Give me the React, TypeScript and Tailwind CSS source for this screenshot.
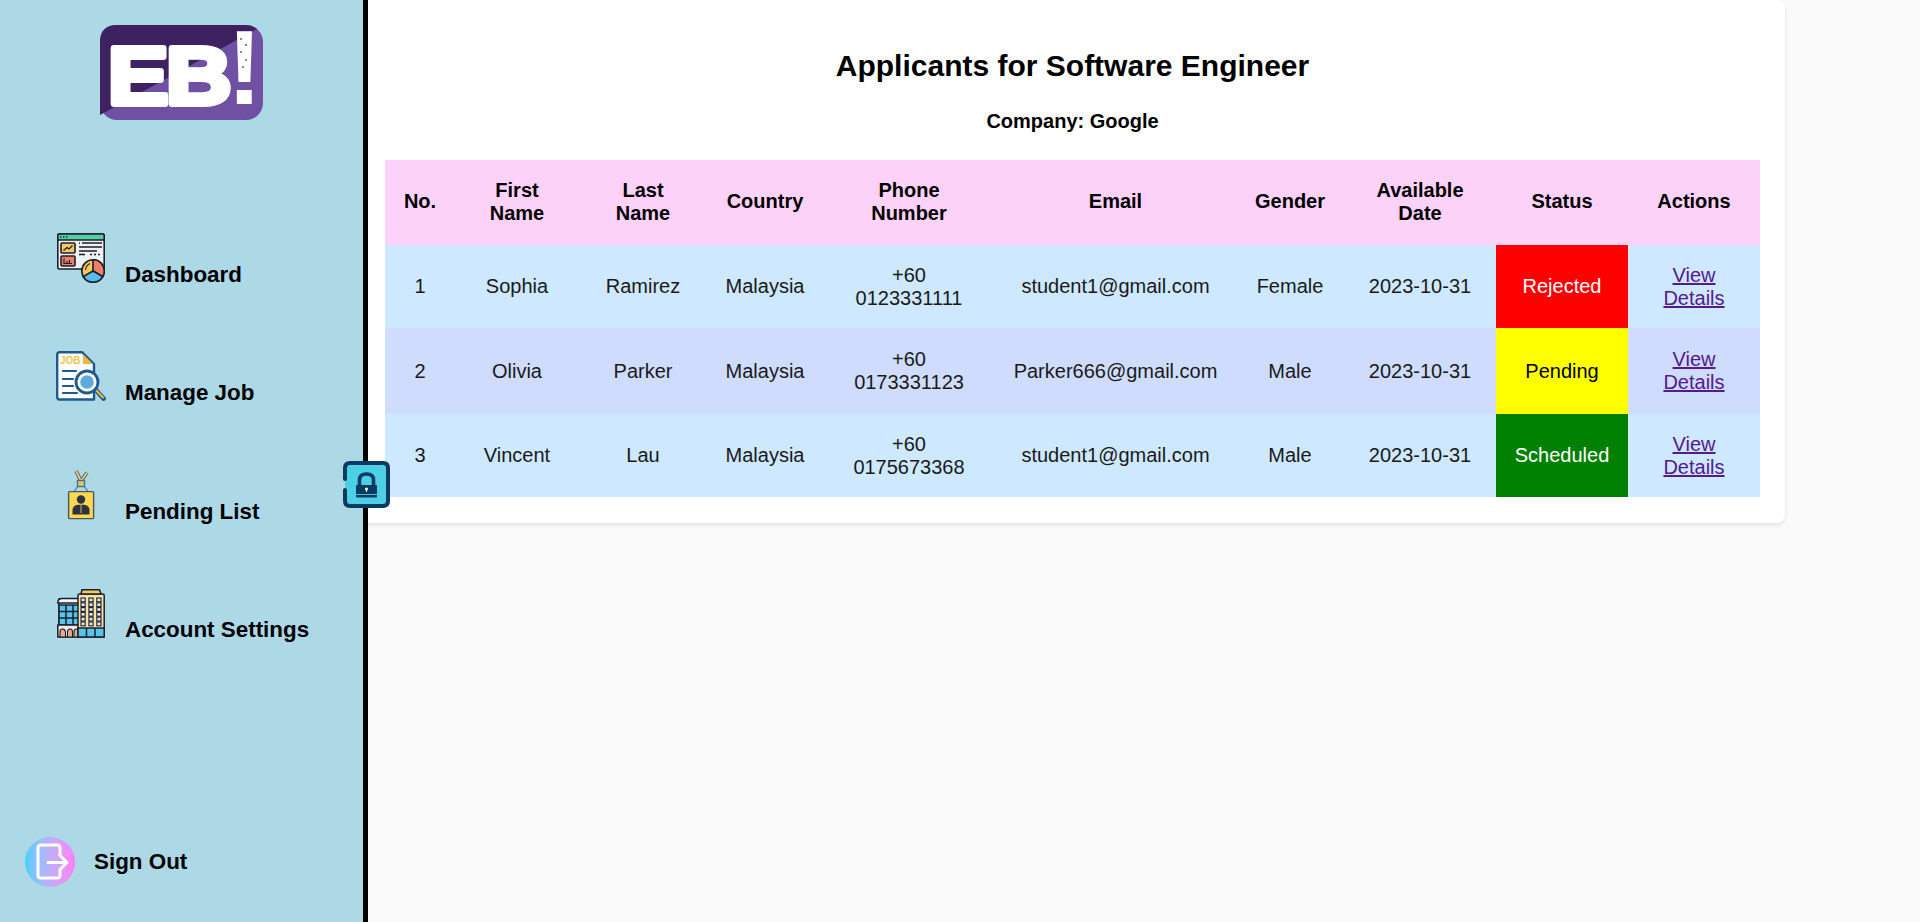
import React from "react";

const D = "#1b1f2e";

function Logo() {
  const f = "'Liberation Sans', sans-serif";
  return (
    <svg width="163" height="95" viewBox="0 0 163 95" className="block overflow-visible">
      <rect width="163" height="95" rx="17" fill="#6f50a2" />
      <path d="M17 0H146Q152 0 157 4L0 90V17Q0 0 17 0Z" fill="#3e2161" />
      <text transform="translate(8 79) scale(1.12 1)" fontFamily={f} fontWeight="700" fontSize="81" fill="#fff" stroke="#fff" strokeWidth="6" strokeLinejoin="round">E</text>
      <text transform="translate(66 79) scale(1.12 1)" fontFamily={f} fontWeight="700" fontSize="81" fill="#fff" stroke="#fff" strokeWidth="6" strokeLinejoin="round">B</text>
      <text x="127" y="79" fontFamily={f} fontWeight="700" fontSize="105" fill="#fff">!</text>
      <g fill="#6f50a2">
        <circle cx="141" cy="14" r="1" /><circle cx="146" cy="20" r="1.1" /><circle cx="141" cy="27" r="1" /><circle cx="146" cy="35" r="1" /><circle cx="143" cy="42" r="1" />
      </g>
    </svg>
  );
}

function DashIcon() {
  return (
    <svg width="48" height="50" viewBox="0 0 48 50" className="block">
      <rect x="0.8" y="1" width="46.4" height="35" rx="1.5" fill="#eef0f2" stroke={D} strokeWidth="1.6" />
      <path d="M0.8 7V2.5Q0.8 1 2.3 1H45.7Q47.2 1 47.2 2.5V7Z" fill="#52cfa6" stroke={D} strokeWidth="1.6" />
      <g fill={D}><rect x="3" y="3.3" width="1.4" height="1.4" /><rect x="6" y="3.3" width="1.4" height="1.4" /><rect x="9" y="3.3" width="1.4" height="1.4" /></g>
      <rect x="4" y="10" width="14" height="10" rx="1" fill="#f6c85f" stroke={D} strokeWidth="1.6" />
      <path d="M6.5 17.5L10 14.5L12 16L15.5 12.5" fill="none" stroke={D} strokeWidth="1.3" />
      <rect x="4" y="23" width="14" height="10" rx="1" fill="#ee7f69" stroke={D} strokeWidth="1.6" />
      <path d="M7 25.5V30.5H15M10 28V30M12.5 27V30" fill="none" stroke={D} strokeWidth="1.2" />
      <path d="M25 10H45M22 14H45M22 18H40" stroke={D} strokeWidth="1.5" />
      <path d="M22 10H23M22 21.5H28M33 21.5H35M37 21.5H39M41 21.5H43" stroke={D} strokeWidth="1.3" />
      <circle cx="36" cy="38" r="11.2" fill="#f6c85f" stroke={D} strokeWidth="1.6" />
      <path d="M36 26.8A11.2 11.2 0 0 1 45.7 43.6L36 38Z" fill="#ee7f69" stroke={D} strokeWidth="1.6" />
      <path d="M45.7 43.6A11.2 11.2 0 0 1 26.3 43.6L36 38Z" fill="#56bde8" stroke={D} strokeWidth="1.6" />
      <path d="M28.5 37A8 8 0 0 1 33 30.5" fill="none" stroke={D} strokeWidth="1.1" />
    </svg>
  );
}

function JobIcon() {
  const b = "#1e5a8e";
  return (
    <svg width="50" height="50" viewBox="0 0 50 50" className="block">
      <path d="M3.5 1.2H26L38 13V48.5H3.5Q1.2 48.5 1.2 46V3.5Q1.2 1.2 3.5 1.2Z" fill="#fff" stroke={b} strokeWidth="2.4" strokeLinejoin="round" />
      <path d="M27 3V13H37Z" fill="#eab93c" />
      <text x="4" y="12.5" fontFamily="'Liberation Sans', sans-serif" fontWeight="700" fontSize="10" fill="#f4c24a">JOB</text>
      <path d="M7 20H20M7 28H17M7 35H17M7 42H21" stroke={b} strokeWidth="2.2" strokeLinecap="round" />
      <path d="M39 38L47.5 47.5" stroke={b} strokeWidth="4.8" strokeLinecap="round" />
      <path d="M40 39L47 46.5" stroke="#eab93c" strokeWidth="2.2" strokeLinecap="round" />
      <circle cx="31" cy="31" r="11" fill="#fff" stroke={b} strokeWidth="2.8" />
      <circle cx="31" cy="31" r="6.8" fill="#5fa9df" />
    </svg>
  );
}

function BadgeIcon() {
  const c = "#4a5565";
  return (
    <svg width="30" height="50" viewBox="0 0 30 50" className="block">
      <path d="M10 1L15 11L21 2.5" fill="none" stroke={c} strokeWidth="3.6" />
      <path d="M10 1L15 11L21 2.5" fill="none" stroke="#e5d27a" strokeWidth="1.8" />
      <rect x="11.5" y="10.5" width="7" height="6" fill="#e9c85a" stroke="#44709c" strokeWidth="1.4" />
      <path d="M12 16L8 21.5M18 16L22 21.5" stroke="#44709c" strokeWidth="1.1" />
      <rect x="2.6" y="21.6" width="25" height="27" rx="1" fill="#fcd94f" stroke={c} strokeWidth="1.4" />
      <circle cx="15" cy="29.5" r="4.2" fill="#2d3440" />
      <path d="M6.5 44.5V40Q6.5 35.5 12 34.8H18Q23.5 35.5 23.5 40V44.5Z" fill="#2d3440" />
      <path d="M15 35V43" stroke="#fcd94f" strokeWidth="0.8" />
    </svg>
  );
}

function BuildingIcon() {
  return (
    <svg width="48" height="49" viewBox="0 0 48 49" className="block">
      <rect x="2" y="10" width="21" height="37" fill="#e9edf2" stroke={D} strokeWidth="1.5" />
      <path d="M0.8 14Q0.8 9.5 5 9.5H23V14Z" fill="#f4f5f7" stroke={D} strokeWidth="1.5" />
      <rect x="2" y="16" width="21" height="20" fill="#58c3ea" stroke={D} strokeWidth="1.5" />
      <path d="M9 16V36M16 16V36M2 22.5H23M2 29H23" stroke={D} strokeWidth="1.5" />
      <rect x="0.8" y="36" width="22.2" height="12" fill="#efe7e2" stroke={D} strokeWidth="1.5" />
      <path d="M3 48V43Q3 40 5.5 40T8.5 43V48ZM10.5 48V43Q10.5 40 13 40T15.5 43V48ZM17 48V43Q17 40 19.5 40T22.5 43V48Z" fill="#e8ab8f" stroke={D} strokeWidth="1.1" />
      <rect x="21" y="5" width="26.2" height="43" rx="1.5" fill="#fbe3a4" stroke={D} strokeWidth="1.5" />
      <path d="M24 5L25 0.8H42.5L44 5Z" fill="#f6c85f" stroke={D} strokeWidth="1.5" />
      {[0, 1, 2].map((c) =>
        [0, 1, 2, 3, 4, 5].map((r) => (
          <rect key={`${c}-${r}`} x={24 + c * 7.9} y={9 + r * 4.8} width="4.2" height="3.8" fill="#e4e7ea" stroke={D} strokeWidth="1.1" />
        ))
      )}
      <rect x="21" y="39" width="26.2" height="9" fill="#58c3ea" stroke={D} strokeWidth="1.5" />
      <path d="M29.5 39V48M38 39V48" stroke={D} strokeWidth="1.5" />
    </svg>
  );
}

function LockIcon() {
  return (
    <svg width="47" height="47" viewBox="0 0 47 47" className="block">
      <rect x="2" y="2" width="43" height="43" rx="5" fill="#4dd0e5" />
      <path d="M2 18V7Q2 2 7 2H40Q45 2 45 7V40Q45 45 40 45H7Q2 45 2 40V29" fill="none" stroke="#0b3a61" strokeWidth="4" strokeLinecap="round" />
      <path d="M16.5 25V19Q16.5 13 23.5 13T30.5 19V25" fill="none" stroke="#0b3a61" strokeWidth="3.6" />
      <rect x="13" y="24" width="21" height="12.5" rx="1" fill="#0b3a61" />
      <rect x="13" y="33" width="21" height="0.9" fill="#4dd0e5" />
      <circle cx="23.5" cy="28" r="1.5" fill="#fff" />
      <rect x="23" y="28" width="1" height="3" fill="#fff" />
    </svg>
  );
}

function SignOutIcon() {
  return (
    <div className="w-[50px] h-[50px] rounded-full bg-gradient-to-r from-[#3fd0ff] to-[#ff7df5]">
      <svg width="50" height="50" viewBox="0 0 50 50" className="block">
        <path d="M35 18V11Q35 8 32 8H16Q13 8 13 11V38Q13 41 16 41H32Q35 41 35 38V33" fill="none" stroke="#fff" strokeWidth="3" strokeLinecap="round" />
        <path d="M23 25.5H42M35 18.5L42 25.5L35 32.5" fill="none" stroke="#fff" strokeWidth="3" strokeLinecap="round" strokeLinejoin="round" />
      </svg>
    </div>
  );
}

const nav = [
  { label: "Dashboard", icon: <DashIcon />, cls: "pl-[57px]", w: "w-[48px]" },
  { label: "Manage Job", icon: <JobIcon />, cls: "pl-[56px]", w: "w-[49px]" },
  { label: "Pending List", icon: <BadgeIcon />, cls: "pl-[66px]", w: "w-[39px]" },
  { label: "Account Settings", icon: <BuildingIcon />, cls: "pl-[57px]", w: "w-[48px] pt-px" },
];

const cols = ["w-[70px]", "w-[124px]", "w-[128px]", "w-[116px]", "w-[172px]", "w-[241px]", "w-[108px]", "w-[152px]", "w-[132px]", "w-[132px]"];
const heads = ["No.", "First Name", "Last Name", "Country", "Phone Number", "Email", "Gender", "Available Date", "Status", "Actions"];
const rows = [
  { no: 1, first: "Sophia", last: "Ramirez", phone: "+60 0123331111", email: "student1@gmail.com", gender: "Female", status: "Rejected", bg: "bg-[#cde8ff] h-[83px]", st: "bg-[#ff0000] text-white" },
  { no: 2, first: "Olivia", last: "Parker", phone: "+60 0173331123", email: "Parker666@gmail.com", gender: "Male", status: "Pending", bg: "bg-[#cfdcfe] h-[86px]", st: "bg-[#ffff00] text-black" },
  { no: 3, first: "Vincent", last: "Lau", phone: "+60 0175673368", email: "student1@gmail.com", gender: "Male", status: "Scheduled", bg: "bg-[#cde8ff] h-[83px]", st: "bg-[#008000] text-white" },
];

export default function App() {
  return (
    <div className="flex h-screen overflow-hidden bg-[#fafafa] text-black font-['Liberation_Sans',Arial,sans-serif]">
      <aside className="relative z-10 flex flex-col shrink-0 w-[368px] h-full bg-[#add8e6] border-r-[5px] border-black">
        <div className="flex justify-center pt-[25px]"><Logo /></div>
        <nav className="mt-[113px] flex flex-col">
          {nav.map((n) => (
            <div key={n.label} className={`flex items-start h-[118.4px] ${n.cls}`}>
              <div className={`shrink-0 ${n.w}`}>{n.icon}</div>
              <span className="ml-5 mt-[29px] text-[22.4px] leading-[26px] font-bold">{n.label}</span>
            </div>
          ))}
        </nav>
        <div className="mt-auto mb-[35px] ml-[25px] flex items-center">
          <SignOutIcon />
          <span className="ml-[19px] text-[22.4px] leading-[26px] font-bold">Sign Out</span>
        </div>
        <div className="absolute left-[343px] top-[461px] z-20"><LockIcon /></div>
      </aside>
      <main className="flex-1 min-w-0">
        <section className="-ml-2 w-[1425px] h-[523px] bg-white rounded-lg shadow-[0_2px_4px_rgba(0,0,0,0.1)] px-[25px] pt-[49px]">
          <h1 className="text-[30px] leading-[34px] font-bold text-center">Applicants for Software Engineer</h1>
          <p className="mt-[27px] text-[20px] leading-[23px] font-bold text-center">Company: Google</p>
          <table className="mt-[27px] w-[1375px] table-fixed border-collapse text-[20px] leading-[23px] text-center">
            <colgroup>{cols.map((c, i) => <col key={i} className={c} />)}</colgroup>
            <thead>
              <tr className="bg-[#fdd2f9] h-[85px]">
                {heads.map((h) => <th key={h} className="px-4 pb-[2px] font-bold align-middle">{h}</th>)}
              </tr>
            </thead>
            <tbody className="text-[#1a1a1a]">
              {rows.map((r) => (
                <tr key={r.no} className={r.bg}>
                  <td className="px-4">{r.no}</td>
                  <td className="px-4">{r.first}</td>
                  <td className="px-4">{r.last}</td>
                  <td className="px-4">Malaysia</td>
                  <td className="px-4">{r.phone}</td>
                  <td className="px-4">{r.email}</td>
                  <td className="px-4">{r.gender}</td>
                  <td className="px-4">2023-10-31</td>
                  <td className={`px-4 ${r.st}`}>{r.status}</td>
                  <td className="px-4"><a href="#" className="text-[#551a8b] underline">View Details</a></td>
                </tr>
              ))}
            </tbody>
          </table>
        </section>
      </main>
    </div>
  );
}
